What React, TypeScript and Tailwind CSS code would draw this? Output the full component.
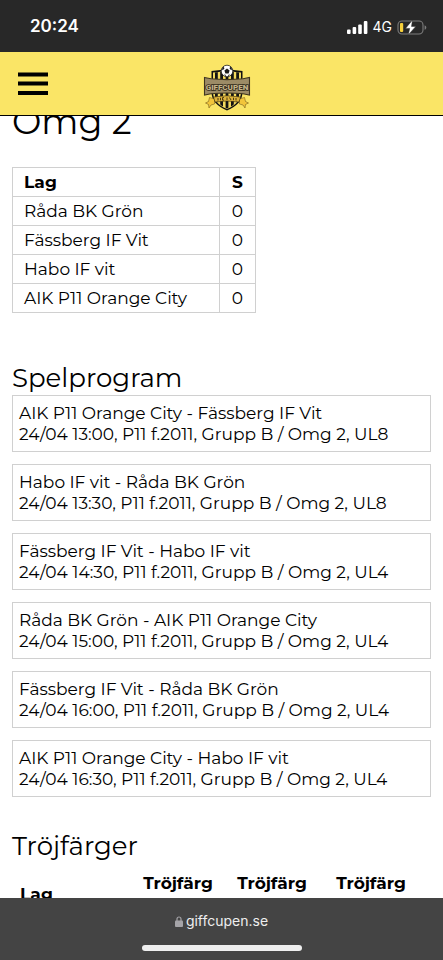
const standings = [
  { team: 'Råda BK Grön', played: 0 },
  { team: 'Fässberg IF Vit', played: 0 },
  { team: 'Habo IF vit', played: 0 },
  { team: 'AIK P11 Orange City', played: 0 },
];

const games = [
  { home: 'AIK P11 Orange City', away: 'Fässberg IF Vit', time: '13:00', pitch: 'UL8' },
  { home: 'Habo IF vit', away: 'Råda BK Grön', time: '13:30', pitch: 'UL8' },
  { home: 'Fässberg IF Vit', away: 'Habo IF vit', time: '14:30', pitch: 'UL4' },
  { home: 'Råda BK Grön', away: 'AIK P11 Orange City', time: '15:00', pitch: 'UL4' },
  { home: 'Fässberg IF Vit', away: 'Råda BK Grön', time: '16:00', pitch: 'UL4' },
  { home: 'AIK P11 Orange City', away: 'Habo IF vit', time: '16:30', pitch: 'UL4' },
];

function StatusBar() {
  return (
    <div className="flex h-[52px] shrink-0 items-center justify-between bg-[#282828] pl-[30px] pr-4 pt-0.5 font-['Inter',sans-serif] text-white">
      <span className="text-[17px] font-semibold">20:24</span>
      <div className="flex items-center gap-[5px]">
        <svg className="h-[13px] w-[21px]" viewBox="0 0 21 13" fill="currentColor">
          <rect x="0" y="8.5" width="3.6" height="4.5" rx="1" />
          <rect x="5.6" y="6" width="3.6" height="7" rx="1" />
          <rect x="11.2" y="3.5" width="3.6" height="9.5" rx="1" />
          <rect x="16.8" y="0" width="3.6" height="13" rx="1" />
        </svg>
        <span className="text-sm">4G</span>
        <svg className="h-[15px] w-[30px]" viewBox="0 0 30 15" fill="none">
          <rect x="1" y="1" width="25" height="13" rx="4" stroke="#7d7d7d" strokeWidth="1.1" />
          <path d="M27.6 5.2c1.1.4 1.7 1.3 1.7 2.3s-.6 1.9-1.7 2.3z" fill="#7d7d7d" />
          <rect x="3" y="3" width="3.2" height="9" rx="1" fill="#f8d13c" />
          <path d="M15.5 0 8.500 8.400h4.200L11.200 15l7.600-8.600h-4.300z" fill="#fff" stroke="#282828" strokeWidth=".5" />
        </svg>
      </div>
    </div>
  );
}

function Logo() {
  return (
    <svg className="h-12 w-12" viewBox="0 0 48 48" fill="none" role="img" aria-label="Giffcupen">
      <defs>
        <clipPath id="shield">
          <path d="M11 8.500q6.500-.2 13-3 6.500 2.800 13 3v19.500q0 11-13 16.500Q11 39 11 28z" />
        </clipPath>
      </defs>
      <path d="M8.500 7q8 0 15.500-3 7.500 3 15.500 3v21q0 12-15.500 18.500Q8.500 40 8.500 28z" fill="#111" />
      <path d="M10 8.500q7.500-.2 14-3 6.500 2.800 14 3v19.500q0 11-14 17Q10 39 10 28z" fill="#f3da5e" />
      <g clipPath="url(#shield)" fill="#141414">
        <rect x="12" y="8" width="2.800" height="40" />
        <rect x="17.200" y="4" width="2.800" height="44" />
        <rect x="22.600" y="4" width="2.800" height="44" />
        <rect x="28" y="4" width="2.800" height="44" />
        <rect x="33.200" y="8" width="2.800" height="40" />
      </g>
      <circle cx="24" cy="7" r="5.800" fill="#fff" stroke="#222" strokeWidth=".8" />
      <path
        d="m24 4.500 2.600 1.900-1 3h-3.200l-1-3zM18.800 5l2-2.500.6 1.900-1.600 1.900zM29.200 5l-2-2.500-.6 1.900 1.600 1.900zM20.500 10.500l2 .2.700 1.700zM27.500 10.500l-2 .2-.7 1.700z"
        fill="#1b1b1b"
      />
      <path
        d="M1.500 13.500 8 14.800q16 1.600 32 0l6.500-1.300V31L40 29.800q-16-1.600-32 0L1.500 31z"
        fill="#9c8b66"
        stroke="#40361f"
        strokeWidth="1.100"
      />
      <text
        x="24"
        y="25.500"
        textAnchor="middle"
        className="font-['Roboto',sans-serif] text-[8px] font-black [paint-order:stroke]"
        fill="#c2b28a"
        stroke="#332b1b"
        strokeWidth="1.600"
      >
        GIFFCUPEN
      </text>
      <path
        d="m6.500 33.500 5 1.500v5l-3.500 1-2 3-.5-3.500L2.500 39l3-1.500zM41.500 33.500l-5 1.500v5l3.500 1 2 3 .5-3.500 3-1.500-3-1.500z"
        fill="#f2c53b"
        stroke="#7a5f1c"
        strokeWidth=".6"
      />
      <path d="M10.500 33q13.500-2.500 27 0l-1.500 5q-12-2-24 0z" fill="#dcb33c" stroke="#3a2d0e" strokeWidth=".6" />
      <path
        d="M15 34v2.500M17.500 33.800v2.500M21 33.600h-1.500v2.500H21M24 33.500v2.500M26.500 33.500l1.500 2.500M30.500 33.700v2.500M33 34v2.500"
        stroke="#3a2d0e"
        strokeWidth=".9"
      />
    </svg>
  );
}

function Header() {
  return (
    <header className="grid h-16 shrink-0 grid-cols-3 items-center border-b border-black bg-[#fae566] px-3">
      <button type="button" aria-label="Meny" className="w-10 px-1.5">
        <svg className="h-6 w-[30px]" viewBox="0 0 30 24" fill="#000">
          <rect y="0.500" width="30" height="4" />
          <rect y="9.500" width="30" height="4" />
          <rect y="19" width="30" height="4" />
        </svg>
      </button>
      <a href="#" className="justify-self-center pl-3 pt-2">
        <Logo />
      </a>
    </header>
  );
}

function Standings() {
  return (
    <table className="mt-6 border-collapse text-[17px] leading-7">
      <thead>
        <tr>
          <th className="w-[207px] border border-[#d0d0d0] px-[11px] text-left font-bold">Lag</th>
          <th className="w-9 border border-[#d0d0d0] text-center font-bold">S</th>
        </tr>
      </thead>
      <tbody>
        {standings.map((row) => (
          <tr key={row.team}>
            <td className="border border-[#d0d0d0] px-[11px]">{row.team}</td>
            <td className="border border-[#d0d0d0] text-center">{row.played}</td>
          </tr>
        ))}
      </tbody>
    </table>
  );
}

function JerseyColors() {
  return (
    <div className="mt-2.5 pr-2">
      <table className="w-full text-[17px] leading-[21px]">
        <thead>
          <tr>
            <th className="px-2 text-left">Lag</th>
            <th className="w-[94px]">
              Tröjfärg
              <br />1
            </th>
            <th className="w-[94px]">
              Tröjfärg
              <br />2
            </th>
            <th className="w-[104px]">
              Tröjfärg
              <br />3
            </th>
          </tr>
        </thead>
      </table>
    </div>
  );
}

export default function App() {
  return (
    <div className="flex h-screen flex-col overflow-hidden bg-white font-['Montserrat','Inter',sans-serif] text-black">
      <StatusBar />
      <Header />
      <main className="min-h-0 flex-1 overflow-hidden px-3">
        <h1 className="-mt-[15px] text-[35px] leading-[42px]">Omg 2</h1>
        <Standings />

        <h2 className="mt-12 text-[26px] leading-[34px]">Spelprogram</h2>
        <ul className="flex flex-col gap-3">
          {games.map((game) => (
            <li key={game.time} className="border border-[#d0d0d0] px-1.5 pb-1.5 pt-[7px] text-[17px] leading-[21px]">
              <p>
                {game.home} - {game.away}
              </p>
              <p>
                24/04 {game.time}, P11 f.2011, Grupp B / Omg 2, {game.pitch}
              </p>
            </li>
          ))}
        </ul>

        <h2 className="mt-8 text-[26px] leading-[34px]">Tröjfärger</h2>
        <JerseyColors />
      </main>
      <footer className="flex h-[62px] shrink-0 flex-col items-center justify-between bg-[#444] pb-[9px] pt-[13px] font-['Inter',sans-serif] text-[#eee]">
        <p className="flex items-center gap-[3px] text-sm">
          <svg className="h-[11px] w-2" viewBox="0 0 8 11" fill="none">
            <path d="M2 5V3a2 2 0 0 1 4 0v2" stroke="#a5a4a8" strokeWidth="1.2" />
            <rect y="4.5" width="8" height="6.5" rx="1" fill="#a5a4a8" />
          </svg>
          giffcupen.se
        </p>
        <div className="h-1.5 w-40 rounded-full bg-[#eee]" />
      </footer>
    </div>
  );
}
